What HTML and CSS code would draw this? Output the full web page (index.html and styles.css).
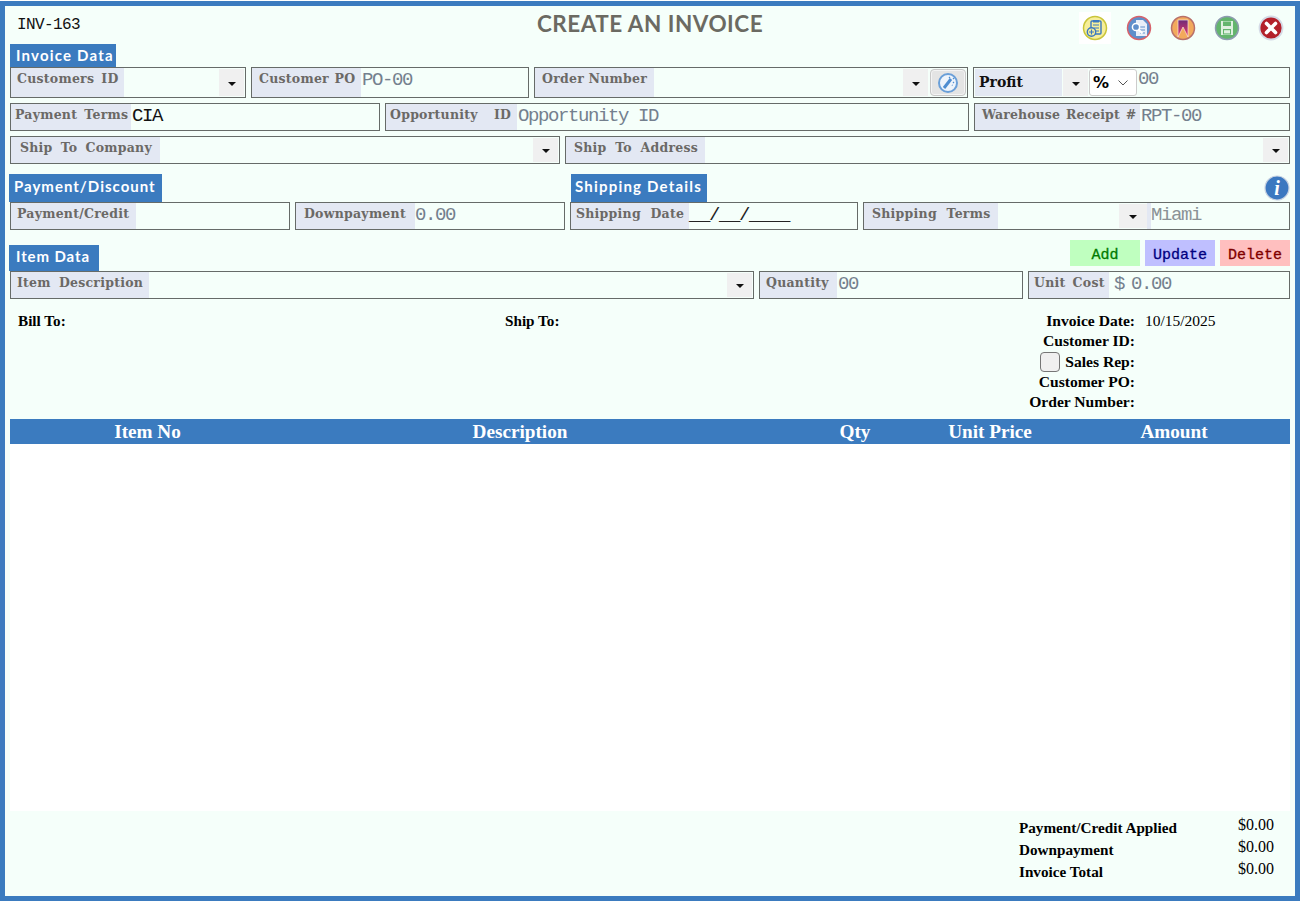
FILE: index.html
```
<!DOCTYPE html>
<html lang="en">
<head>
<meta charset="utf-8">
<title>Create an Invoice</title>
<link rel="stylesheet" href="styles.css">
</head>
<body>
<div class="window">
  <header class="top">
    <span class="inv-no">INV-163</span>
    <h1 class="title">CREATE AN INVOICE</h1>
    <div class="tools">
      <span class="tool tool-first"><svg viewBox="0 0 26 26" class="ic"><circle cx="13" cy="13" r="11.5" fill="#f6ee9a" stroke="#c9c53a" stroke-width="1.5"/><rect x="9" y="6" width="10" height="13" rx="1" fill="#f6ee9a" stroke="#3b78c0" stroke-width="1.4"/><rect x="11" y="5" width="6" height="2.5" fill="#3b78c0"/><path d="M11 10h6M12 13h5M14 16h3" stroke="#3b78c0" stroke-width="1.2"/><circle cx="9.5" cy="17" r="4.2" fill="#f6ee9a" stroke="#3b78c0" stroke-width="1.4"/><path d="M9.5 14.5v5M7 17h5" stroke="#3b78c0" stroke-width="1.2"/></svg></span>
      <span class="tool"><svg viewBox="0 0 26 26" class="ic"><circle cx="13" cy="13" r="11.5" fill="#5f8fcb" stroke="#d8626a" stroke-width="1.5"/><path d="M10 5h7l4 4v12H10z" fill="#e8eef8"/><path d="M14 12h5M14 15h5M14 18h5" stroke="#5f8fcb" stroke-width="1"/><circle cx="10" cy="12" r="3.6" fill="#5f8fcb" stroke="#fff" stroke-width="1.5"/><path d="M12.5 14.5l4 4" stroke="#fff" stroke-width="2"/></svg></span>
      <span class="tool"><svg viewBox="0 0 26 26" class="ic"><defs><linearGradient id="bm" x1="0" y1="0" x2="0" y2="1"><stop offset="0" stop-color="#6d2a78"/><stop offset="1" stop-color="#f03a6a"/></linearGradient></defs><circle cx="13" cy="13" r="11.5" fill="#f2a95c" stroke="#b8706a" stroke-width="1.5"/><path d="M8 5h10v17L13 12 8 22z" fill="url(#bm)" stroke="#f6e6e0" stroke-width=".7"/></svg></span>
      <span class="tool"><svg viewBox="0 0 26 26" class="ic"><circle cx="13" cy="13" r="11.5" fill="#63b56d" stroke="#8e9bb0" stroke-width="1.5"/><path d="M7 6h12v14H7z" fill="#dff0e0"/><rect x="9" y="6.5" width="8" height="4.5" fill="#63b56d"/><rect x="9" y="14" width="8" height="5.5" fill="#63b56d"/><rect x="10" y="15.2" width="6" height="3.2" fill="#dff0e0"/></svg></span>
      <span class="tool"><svg viewBox="0 0 26 26" class="ic"><circle cx="13" cy="13" r="11.5" fill="#b3202a" stroke="#d4dae6" stroke-width="1.8"/><path d="M8.5 8.5l9 9M17.500 8.500l-9 9" stroke="#fff" stroke-width="3.600" stroke-linecap="round"/></svg></span>
    </div>
  </header>

  <div class="tab-row"><h2 class="tab tab-a">Invoice Data</h2></div>
  <div class="row row-tall">
    <div class="field f-cust"><span class="lbl l-cust">Customers ID</span><span class="fill"></span><span class="drop"></span></div>
    <div class="field f-po"><span class="lbl l-po">Customer PO</span><span class="val">PO-00</span></div>
    <div class="field f-order"><span class="lbl l-order">Order Number</span><span class="fill"></span><span class="drop"></span>
      <button class="wand"><svg viewBox="0 0 22 22" class="wand-ic"><circle cx="11" cy="11" r="9" fill="#eef4fb" stroke="#6a9fd8" stroke-width="2"/><path d="M7 16L14 7" stroke="#4f8dd0" stroke-width="3"/><path d="M12 5l1 1M16 6l1 1M16 10l1 1M15 13l.5 .5" stroke="#4f8dd0" stroke-width="1.200"/></svg></button>
    </div>
    <div class="field f-profit"><span class="lbl l-profit">Profit</span><span class="drop drop-profit"></span><span class="pct"><b>%</b><svg viewBox="0 0 10 6" class="chev"><path d="M.5 .5L5 5 9.500 .5" fill="none" stroke="#555" stroke-width="1"/></svg></span><span class="val v-profit">00</span></div>
  </div>
  <div class="row">
    <div class="field f-terms"><span class="lbl l-terms">Payment Terms</span><span class="val dark">CIA</span></div>
    <div class="field f-opp"><span class="lbl l-opp">Opportunity&nbsp; ID</span><span class="val">Opportunity ID</span></div>
    <div class="field f-ware"><span class="lbl l-ware">Warehouse Receipt #</span><span class="val">RPT-00</span></div>
  </div>
  <div class="row">
    <div class="field f-shipco"><span class="lbl l-shipco">Ship To Company</span><span class="fill"></span><span class="drop"></span></div>
    <div class="field f-shipad"><span class="lbl l-shipad">Ship To Address</span><span class="fill"></span><span class="drop"></span></div>
  </div>

  <div class="tab-row tab-row-2">
    <h2 class="tab tab-b">Payment/Discount</h2>
    <h2 class="tab tab-c">Shipping Details</h2>
    <span class="info"><svg viewBox="0 0 26 26" class="ic"><circle cx="13" cy="13" r="12" fill="#3b78c0" stroke="#c9d3e2" stroke-width="1.200"/><text x="13" y="20" class="info-i">i</text></svg></span>
  </div>
  <div class="row row-joined">
    <div class="field f-credit"><span class="lbl l-credit">Payment/Credit</span></div>
    <div class="field f-down"><span class="lbl l-down">Downpayment</span><span class="val v-down">0.00</span></div>
    <div class="field f-sdate"><span class="lbl l-sdate">Shipping Date</span><span class="val dark date">__/__/____</span></div>
    <div class="field f-sterm"><span class="lbl l-sterm">Shipping Terms</span><span class="fill"></span><span class="drop"></span><span class="val v-miami">Miami</span></div>
  </div>

  <div class="tab-row tab-row-3">
    <h2 class="tab tab-d">Item Data</h2>
    <div class="actions">
      <button class="act act-add">Add</button>
      <button class="act act-upd">Update</button>
      <button class="act act-del">Delete</button>
    </div>
  </div>
  <div class="row row-joined">
    <div class="field f-item"><span class="lbl l-item">Item Description</span><span class="fill"></span><span class="drop"></span></div>
    <div class="field f-qty"><span class="lbl l-qty">Quantity</span><span class="val">00</span></div>
    <div class="field f-cost"><span class="lbl l-cost">Unit Cost</span><span class="val v-cost">$ 0.00</span></div>
  </div>

  <section class="meta">
    <div class="addr addr-bill">Bill To:</div>
    <div class="addr addr-ship">Ship To:</div>
    <dl class="info-list">
      <div class="info-line"><dt>Invoice Date:</dt><dd>10/15/2025</dd></div>
      <div class="info-line"><dt>Customer ID:</dt><dd></dd></div>
      <div class="info-line"><dt><span class="check"></span>Sales Rep:</dt><dd></dd></div>
      <div class="info-line"><dt>Customer PO:</dt><dd></dd></div>
      <div class="info-line"><dt>Order Number:</dt><dd></dd></div>
    </dl>
  </section>

  <div class="thead">
    <span>Item No</span>
    <span>Description</span>
    <span class="th-qty">Qty</span>
    <span>Unit Price</span>
    <span class="th-amt">Amount</span>
  </div>
  <div class="tbody"></div>

  <footer class="totals">
    <div class="tot-line"><b>Payment/Credit Applied</b><span>$0.00</span></div>
    <div class="tot-line"><b>Downpayment</b><span>$0.00</span></div>
    <div class="tot-line"><b>Invoice Total</b><span>$0.00</span></div>
  </footer>
</div>
</body>
</html>
```
FILE: styles.css
```
* { box-sizing: border-box; }
html, body { margin: 0; height: 100%; background: #fff; overflow: hidden; }
.window {
  width: 1300px; height: 900px; margin-top: 1px;
  border: 5px solid #3b7bbf;
  background: #f5fffa;
  padding: 0 5px;
  display: flex; flex-direction: column;
  font-family: "Liberation Serif", serif;
}
.top { height: 38px; display: flex; align-items: flex-start; position: relative; flex: none; }
.inv-no { font: 16px/20px "Liberation Mono", monospace; margin: 9px 0 0 7px; letter-spacing: -.6px; color: #111; }
.title {
  position: absolute; left: 0; right: 0; top: 4px; margin: 0; text-align: center;
  font: 700 22.500px/28px Lato, sans-serif; color: #6b6a62; letter-spacing: .5px;
}
.tools { margin-left: auto; display: flex; gap: 18px; margin-top: 9px; margin-right: 6px; }
.tool { width: 26px; height: 26px; display: block; }
.tool-first { background: #fff; box-shadow: 0 0 0 3px #fff; }
.ic { width: 26px; height: 26px; display: block; }

.tab-row { display: flex; height: 23px; flex: none; align-items: flex-end; }
.tab {
  margin: 0; background: #3b7bbf; color: #fff; font: 700 15px/23px Lato, sans-serif;
  padding: 0 6px; letter-spacing: 1.2px; white-space: nowrap;
}
.tab-a { width: 106px; height: 23px; }
.tab-row-2 { margin-top: 5px; height: 28px; position: relative; }
.tab-b { width: 153px; height: 28px; line-height: 25px; margin-left: -1px; padding: 0 5px; letter-spacing: 1px; }
.tab-c { width: 136px; height: 28px; line-height: 25px; margin-left: 409px; padding: 0 4px; }
.info { margin-left: auto; width: 26px; height: 26px; align-self: flex-start; margin-top: 1px; }
.info-i { font: italic 700 20px "Liberation Serif", serif; fill: #fff; text-anchor: middle; }
.tab-row-3 { margin-top: 15px; height: 26px; position: relative; }
.tab-d { width: 90px; height: 26px; line-height: 23px; margin-left: -1px; padding: 0 7px; letter-spacing: .9px; }
.actions { margin-left: auto; display: flex; gap: 5px; position: absolute; right: 0; top: -5px; }
.act {
  width: 70px; height: 26px; border: 0; padding: 5px 0 0;
  font: 15px/21px "Liberation Mono", monospace; -webkit-text-stroke: .3px currentColor;
}
.act-add { background: #bfffbf; color: #007a00; }
.act-upd { background: #bfbfff; color: #00007f; }
.act-del { background: #ffbfbf; color: #7f0000; }

.row { display: flex; gap: 5px; height: 28px; margin-bottom: 5px; flex: none; }
.row-tall { height: 31px; }
.row-joined { margin-bottom: 0; }
.field {
  border: 1px solid #666b68; display: flex; align-items: stretch;
  background: #f5fffa; min-width: 0; overflow: hidden; position: relative;
}
.lbl {
  background: #e3e8f3; color: #6b6966; font: 700 12.500px/21px "DejaVu Serif", serif;
  letter-spacing: .25px; word-spacing: 2.5px;
  padding: 0 0 0 6px; flex: none; white-space: nowrap;
}
.val {
  font: 19px/25px "Liberation Mono", monospace; color: #74808e; letter-spacing: -1.4px;
  padding-left: 1px; white-space: nowrap;
}
.dark { color: #111; }
.date { color: #222; padding-left: 0; }
.fill { flex: 1; }
.drop {
  width: 25px; background: #f0f0f0; flex: none; margin: 1px 1px 1px 0; position: relative;
}
.drop::after {
  content: ""; position: absolute; left: 9px; top: 50%; margin-top: -1px;
  border: 4px solid transparent; border-top: 4px solid #111; border-bottom: 0;
}
.f-cust { width: 236px; } .l-cust { width: 113px; padding-left: 6px; }
.f-po { width: 278px; } .l-po { width: 109px; padding-left: 7px; word-spacing: 1px; }
.f-order { width: 434px; } .l-order { width: 119px; padding-left: 7px; word-spacing: 0; }
.f-order .drop { width: 25px; margin-right: 2px; }
.wand {
  width: 36px; margin: 1px 1px 1px 0; padding: 0; border: 1.500px solid #c8c8c8; border-radius: 4px;
  background: #e4e4e4; display: flex; align-items: center; justify-content: center; box-shadow: inset 0 0 0 1px #f4f4f4;
}
.wand-ic { width: 22px; height: 22px; display: block; }
.f-profit { flex: 1; }
.l-profit { width: 87px; margin: 1px 0 1px 1px; padding-left: 4px; color: #111; font-size: 14px; line-height: 26px; letter-spacing: 0; }
.drop-profit { width: 25px; margin: 1px 1px; }
.pct {
  width: 48px; background: #fff; border: 1px solid #ccc; border-radius: 3px; margin: 1px 0;
  display: flex; align-items: center; justify-content: space-between; padding: 0 8px 0 3px;
  font-size: 16px; color: #000; font-family: "DejaVu Sans", sans-serif;
}
.chev { width: 10px; height: 6px; display: block; }
.v-profit { padding-left: 1px; line-height: 22px; }

.f-terms { width: 370px; } .l-terms { width: 120px; padding-left: 4px; }
.f-opp { width: 584px; } .l-opp { width: 131px; padding-left: 4px; word-spacing: 3.5px; }
.f-ware { flex: 1; } .l-ware { width: 165px; padding-left: 7px; letter-spacing: .1px; word-spacing: 1.5px; }
.f-shipco { width: 550px; } .l-shipco { width: 149px; padding-left: 9px; word-spacing: 3.5px; }
.f-shipad { flex: 1; } .l-shipad { width: 139px; padding-left: 8px; word-spacing: 4px; }
.f-credit { width: 280px; } .l-credit { width: 125px; padding-left: 6px; }
.f-down { width: 270px; } .l-down { width: 119px; padding-left: 8px; }
.v-down { padding-left: 0; }
.f-sdate { width: 288px; } .l-sdate { width: 118px; padding-left: 5px; word-spacing: 5px; }
.f-sterm { flex: 1; } .l-sterm { width: 134px; padding-left: 8px; word-spacing: 5px; }
.f-sterm .drop { width: 28px; margin: 1px 0; }
.f-sterm .drop::after { left: 10px; }
.v-miami { color: #8a9296; width: 142px; padding-left: 0; border-left: 4px solid #e3e8f3; }
.f-item { width: 744px; } .l-item { width: 138px; padding-left: 6px; word-spacing: 3.5px; }
.f-qty { width: 264px; } .l-qty { width: 77px; padding-left: 6px; }
.f-cost { flex: 1; } .l-cost { width: 80px; padding-left: 5px; }
.v-cost { padding-left: 5px; word-spacing: -3px; }

.meta { height: 120px; flex: none; position: relative; display: flex; color: #000; font-size: 15.200px; }
.addr { font-weight: 700; margin-top: 12.500px; line-height: 17px; }
.addr-bill { margin-left: 8px; width: 487px; }
.addr-ship { flex: 1; }
.info-list { margin: 12px 0 0 0; width: 282px; }
.info-line { display: flex; height: 20.300px; align-items: center; }
.info-line dt { font-weight: 700; font-size: 15.600px; width: 127px; text-align: right; white-space: nowrap; display: flex; justify-content: flex-end; align-items: center; }
.info-line dd { margin: 0 0 0 10px; font-size: 15.500px; }
.check { width: 20px; height: 20px; background: #f0f0f0; border: 1px solid #767676; border-radius: 4px; margin-right: 5px; }

.thead {
  height: 25px; flex: none; background: #3b7bbf; color: #fff; font-weight: 700; font-size: 19.200px; line-height: 25px;
  display: grid; grid-template-columns: 275px 470px 175px 120px 1fr; text-align: center;
}
.th-qty { padding-left: 25px; }
.th-amt { padding-left: 8px; }
.tbody { flex: 1; background: #fff; }
.totals { height: 85px; flex: none; padding-top: 5px; padding-left: 1009px; }
.tot-line { display: flex; height: 22px; font-size: 15.200px; color: #000; }
.tot-line b { width: 219px; margin-top: 1px; line-height: 21px; white-space: nowrap; }
.tot-line span { font-size: 16px; line-height: 16px; margin-top: 1px; }
```
